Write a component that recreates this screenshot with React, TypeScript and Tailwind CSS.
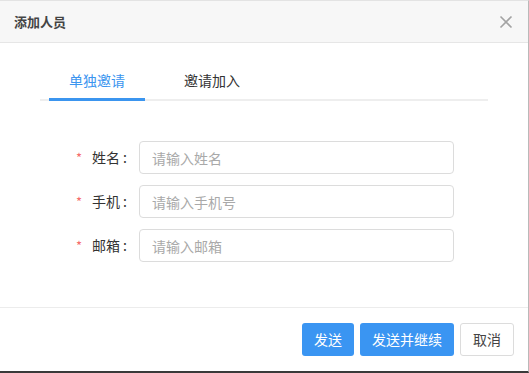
import { useState } from 'react';

const fields = [
  { label: '姓名', placeholder: '请输入姓名' },
  { label: '手机', placeholder: '请输入手机号' },
  { label: '邮箱', placeholder: '请输入邮箱' },
];

export default function App() {
  const [tab, setTab] = useState<'single' | 'join'>('single');

  return (
    <div
      className="w-[529px] h-[373px] flex flex-col bg-white border-t border-t-[#e3e3e3] border-r border-r-[#b9b9b9] border-b-2 border-b-[#3a3a3a] text-[#333]"
      style={{ fontFamily: '"Noto Sans CJK SC", "Noto Sans", sans-serif' }}
    >
      {/* Header */}
      <div className="h-[42px] shrink-0 flex items-center justify-between pl-[14px] pr-[15px] bg-[#f7f7f7] border-b border-[#e6e6e6]">
        <h1 className="text-[13px] font-bold text-[#444] leading-none">添加人员</h1>
        <button className="w-[14px] h-[14px] flex items-center justify-center text-[#a3a3a3]">
          <svg viewBox="0 0 14 14" className="w-[14px] h-[14px]" fill="none" stroke="currentColor" strokeWidth={1.6}>
            <path d="M1.5 1.5l11 11M12.5 1.5l-11 11" />
          </svg>
        </button>
      </div>

      {/* Body */}
      <div className="flex-1">
        {/* Tabs */}
        <div className="mt-[18px] ml-[40px] w-[448px] flex gap-[19px] pl-[9px] border-b-2 border-[#eeeeee]">
          {([
            { key: 'single', label: '单独邀请' },
            { key: 'join', label: '邀请加入' },
          ] as const).map((t) => (
            <button
              key={t.key}
              onClick={() => setTab(t.key)}
              className={
                tab === t.key
                  ? 'w-[96px] h-[40px] -mb-[2px] text-[14px] leading-[36px] border-b-[3px] border-[#3b95ef] text-[#3b95ef]'
                  : 'w-[96px] h-[40px] -mb-[2px] text-[14px] leading-[36px] border-b-[3px] border-transparent text-[#333]'
              }
            >
              {t.label}
            </button>
          ))}
        </div>

        {/* Form */}
        <div className="mt-[40px] flex flex-col gap-[11px]">
          {fields.map((f) => (
            <div key={f.label} className="flex items-center h-[33px]">
              <label className="w-[139px] shrink-0 flex items-center justify-end pr-[12px] text-[14px]">
                <span className="text-[#f56c6c] text-[13px] mr-[10px]">*</span>
                <span className="text-[#333]">{f.label}</span>
                <span className="text-[#333] ml-[3px]">:</span>
              </label>
              <input
                placeholder={f.placeholder}
                className="w-[315px] h-[33px] rounded-[4px] border border-[#dcdcdc] px-[12px] text-[14px] text-[#333] placeholder:text-[#a9a9a9] outline-none"
              />
            </div>
          ))}
        </div>
      </div>

      {/* Footer */}
      <div className="h-[64px] shrink-0 border-t border-[#ececec] flex justify-end items-start pt-[15px] pr-[14px] gap-[6px]">
        <button className="h-[33px] px-[12px] rounded-[3px] bg-[#3a95f2] text-white text-[14px]">发送</button>
        <button className="h-[33px] px-[12px] rounded-[3px] bg-[#3a95f2] text-white text-[14px]">发送并继续</button>
        <button className="h-[33px] px-[12px] rounded-[3px] bg-white border border-[#dcdcdc] text-[#444] text-[14px]">取消</button>
      </div>
    </div>
  );
}
